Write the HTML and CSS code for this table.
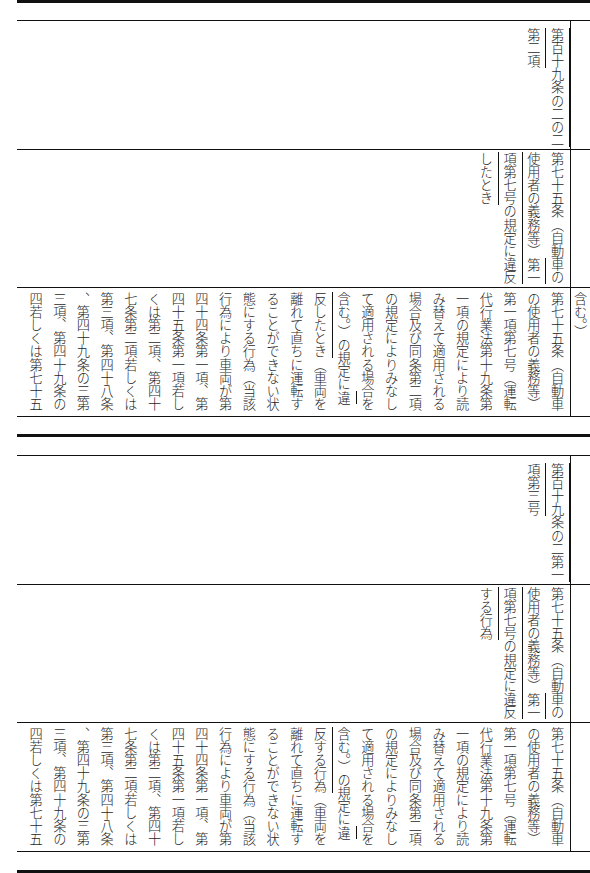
FILE: index.html
```html
<!DOCTYPE html>
<html lang="ja">
<head>
<meta charset="utf-8">
<title>新旧対照表</title>
<link rel="stylesheet" href="styles.css">
</head>
<body>
<div class="page">
  <section class="block first">
    <div class="spacer top"></div>
    <div class="row r1">
      <div class="cell main">
        <div class="col"><span class="m">第百十九条の二の二</span></div>
        <div class="col"><span class="m">第二項</span></div>
      </div>
      <div class="cell side"></div>
    </div>
    <div class="row r2">
      <div class="cell main">
        <div class="col">第七十五条（自動車の</div>
        <div class="col">使用者の義務等）<span class="m">第一</span></div>
        <div class="col"><span class="m">項第七号の規定に違反</span></div>
        <div class="col"><span class="m">したとき</span></div>
      </div>
      <div class="cell side"></div>
    </div>
    <div class="row r3">
      <div class="cell main">
        <div class="col">第七十五条（自動車</div>
        <div class="col">の使用者の義務等）</div>
        <div class="col">第一項第七号（運転</div>
        <div class="col">代行業法第十九条第</div>
        <div class="col">一項の規定により読</div>
        <div class="col">み替えて適用される</div>
        <div class="col">場合及び同条第二項</div>
        <div class="col">の規定によりみなし</div>
        <div class="col">て適用される場合を</div>
        <div class="col">含む。）の規定に<span class="m">違</span></div>
        <div class="col"><span class="m">反したとき</span>（車両を</div>
        <div class="col">離れて直ちに運転す</div>
        <div class="col">ることができない状</div>
        <div class="col">態にする行為（当該</div>
        <div class="col">行為により車両が第</div>
        <div class="col">四十四条第一項、第</div>
        <div class="col">四十五条第一項若し</div>
        <div class="col">くは第二項、第四十</div>
        <div class="col">七条第二項若しくは</div>
        <div class="col">第三項、第四十八条</div>
        <div class="col">、第四十九条の三第</div>
        <div class="col">三項、第四十九条の</div>
        <div class="col">四若しくは第七十五</div>
      </div>
      <div class="cell side">
        <div class="col"><span class="m">含む。）</span></div>
      </div>
    </div>
    <div class="spacer bottom"></div>
  </section>

  <section class="block second">
    <div class="spacer top"></div>
    <div class="row r1">
      <div class="cell main">
        <div class="col"><span class="m">第百十九条の二第一</span></div>
        <div class="col"><span class="m">項第三号</span></div>
      </div>
      <div class="cell side"></div>
    </div>
    <div class="row r2">
      <div class="cell main">
        <div class="col">第七十五条（自動車の</div>
        <div class="col">使用者の義務等）<span class="m">第一</span></div>
        <div class="col"><span class="m">項第七号の規定に違反</span></div>
        <div class="col"><span class="m">する行為</span></div>
      </div>
      <div class="cell side"></div>
    </div>
    <div class="row r3">
      <div class="cell main">
        <div class="col">第七十五条（自動車</div>
        <div class="col">の使用者の義務等）</div>
        <div class="col">第一項第七号（運転</div>
        <div class="col">代行業法第十九条第</div>
        <div class="col">一項の規定により読</div>
        <div class="col">み替えて適用される</div>
        <div class="col">場合及び同条第二項</div>
        <div class="col">の規定によりみなし</div>
        <div class="col">て適用される場合を</div>
        <div class="col">含む。）の規定に<span class="m">違</span></div>
        <div class="col"><span class="m">反する行為</span>（車両を</div>
        <div class="col">離れて直ちに運転す</div>
        <div class="col">ることができない状</div>
        <div class="col">態にする行為（当該</div>
        <div class="col">行為により車両が第</div>
        <div class="col">四十四条第一項、第</div>
        <div class="col">四十五条第一項若し</div>
        <div class="col">くは第二項、第四十</div>
        <div class="col">七条第二項若しくは</div>
        <div class="col">第三項、第四十八条</div>
        <div class="col">、第四十九条の三第</div>
        <div class="col">三項、第四十九条の</div>
        <div class="col">四若しくは第七十五</div>
      </div>
      <div class="cell side"></div>
    </div>
    <div class="spacer bottom"></div>
  </section>
</div>
</body>
</html>
```

FILE: styles.css
```css
html, body {
  margin: 0;
  padding: 0;
  background: #ffffff;
}

body {
  font-family: "Noto Sans CJK JP", "Noto Sans", sans-serif;
  color: #1f1f1f;
  overflow: hidden;
}

.page {
  margin-left: 17px;
  width: 573px;
}

.block {
  border-top: 3px solid #111;
}

.block.second {
  border-bottom: 3px solid #111;
}

.first .spacer.top { height: 17px; }
.first .spacer.bottom { height: 17px; }
.second .spacer.top { height: 18px; }
.second .spacer.bottom { height: 18px; }

.row {
  display: flex;
  border-top: 1px solid #111;
}

.row.r3 {
  border-bottom: 1px solid #111;
}

.r1 { height: 128px; }
.r2 { height: 137px; }
.r3 { height: 128px; }

.cell {
  writing-mode: vertical-rl;
  font-size: 13.2px;
  line-height: 23.7px;
  font-weight: 300;
  white-space: nowrap;
  box-sizing: border-box;
  overflow: hidden;
}

.cell.main {
  width: 554px;
  padding-right: 1px;
  border-right: 1px solid #111;
}

.cell.side {
  width: 19px;
  line-height: 19px;
}

.r1 .cell { padding-top: 7px; }
.r2 .cell { padding-top: 2px; }
.r3 .cell { padding-top: 4px; }

.col {
  display: block;
}

.m {
  border-right: 1px solid #111;
  padding-right: 2px;
}
```
